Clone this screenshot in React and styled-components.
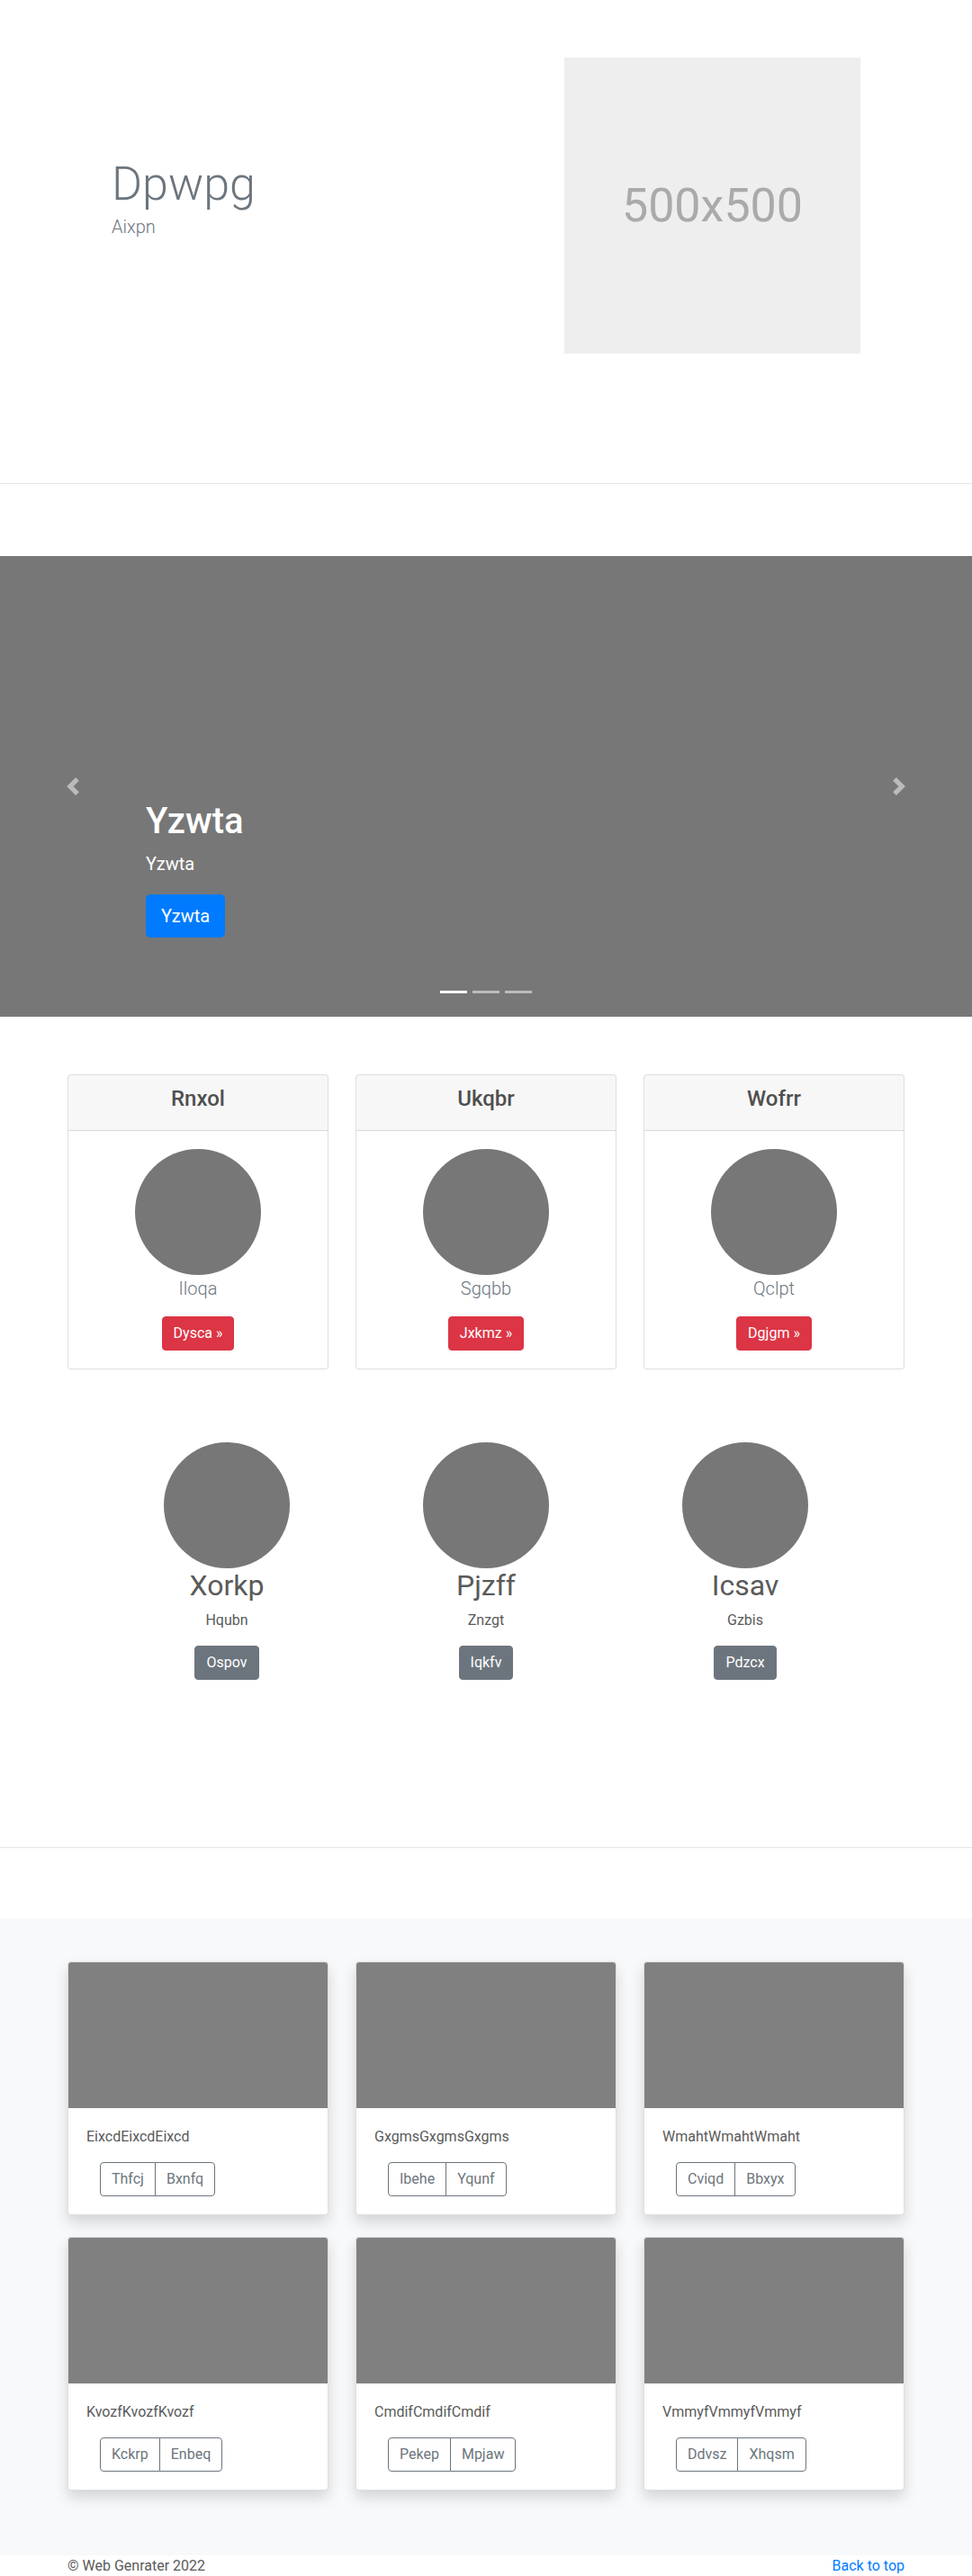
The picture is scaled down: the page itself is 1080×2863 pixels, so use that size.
import React from "react";
import styled, { createGlobalStyle, css } from "styled-components";

const pricing = [
  { title: "Rnxol", lead: "Iloqa", action: "Dysca" },
  { title: "Ukqbr", lead: "Sgqbb", action: "Jxkmz" },
  { title: "Wofrr", lead: "Qclpt", action: "Dgjgm" },
];

const team = [
  { name: "Xorkp", text: "Hqubn", action: "Ospov" },
  { name: "Pjzff", text: "Znzgt", action: "Iqkfv" },
  { name: "Icsav", text: "Gzbis", action: "Pdzcx" },
];

const album = [
  { text: "EixcdEixcdEixcd", a: "Thfcj", b: "Bxnfq" },
  { text: "GxgmsGxgmsGxgms", a: "Ibehe", b: "Yqunf" },
  { text: "WmahtWmahtWmaht", a: "Cviqd", b: "Bbxyx" },
  { text: "KvozfKvozfKvozf", a: "Kckrp", b: "Enbeq" },
  { text: "CmdifCmdifCmdif", a: "Pekep", b: "Mpjaw" },
  { text: "VmmyfVmmyfVmmyf", a: "Ddvsz", b: "Xhqsm" },
];

const GlobalStyle = createGlobalStyle`
  *, *::before, *::after { box-sizing: border-box; }
  body {
    margin: 0;
    font-family: "Segoe UI", Roboto, "Helvetica Neue", Arial, "Noto Sans", "Liberation Sans", sans-serif;
    font-size: 16px;
    line-height: 1.5;
    color: #5a5a5a;
    background: #fff;
  }
  h1, h2, h4, p { margin: 0; }
`;

const variants = {
  primary: css`
    background: #007bff;
    border-color: #007bff;
    color: #fff;
  `,
  danger: css`
    background: #dc3545;
    border-color: #dc3545;
    color: #fff;
  `,
  secondary: css`
    background: #6c757d;
    border-color: #6c757d;
    color: #fff;
  `,
  outline: css`
    background: transparent;
    border-color: #6c757d;
    color: #6c757d;
  `,
};

const Btn = styled.button`
  display: inline-block;
  font-family: inherit;
  font-weight: 400;
  font-size: ${(p) => (p.$lg ? "20px" : "16px")};
  line-height: 1.5;
  padding: ${(p) => (p.$lg ? "8px 16px" : "6px 12px")};
  border: 1px solid transparent;
  border-radius: ${(p) => (p.$lg ? "4.8px" : "4px")};
  cursor: pointer;
  ${(p) => variants[p.$variant || "primary"]}
`;

/* hero */
const Hero = styled.section`
  display: flex;
  justify-content: space-between;
  align-items: center;
  padding: 64px 124px 144px;
  border-bottom: 1px solid #e6e6e6;
`;

const HeroTitle = styled.h1`
  font-size: 52px;
  font-weight: 300;
  line-height: 1.2;
  color: #6c757d;
`;

const HeroLead = styled.p`
  font-size: 20px;
  font-weight: 300;
  color: #6c757d;
  margin-bottom: 16px;
`;

const Placeholder = styled.div`
  width: 329px;
  height: 329px;
  background: #eee;
  color: #aaa;
  font-size: 52px;
  display: flex;
  align-items: center;
  justify-content: center;
`;

/* carousel */
const Carousel = styled.section`
  position: relative;
  margin-top: 80px;
  height: 512px;
  background: #777;
  display: flex;
  align-items: flex-end;
`;

const Caption = styled.div`
  padding: 0 15% 88px;
  color: #fff;
`;

const CaptionTitle = styled.h1`
  font-size: 40px;
  font-weight: 500;
  line-height: 1.2;
  margin-bottom: 8px;
`;

const CaptionText = styled.p`
  font-size: 20px;
  margin-bottom: 19px;
`;

const Control = styled.span`
  position: absolute;
  top: 0;
  bottom: 0;
  ${(p) => p.$side}: 0;
  width: 15%;
  display: flex;
  align-items: center;
  justify-content: center;
  opacity: 0.5;
`;

const Indicators = styled.ol`
  position: absolute;
  left: 0;
  right: 0;
  bottom: 0;
  margin: 0 0 16px;
  padding: 0;
  list-style: none;
  display: flex;
  justify-content: center;
`;

const Indicator = styled.li`
  width: 30px;
  height: 23px;
  margin: 0 3px;
  border-top: 10px solid transparent;
  border-bottom: 10px solid transparent;
  background: #fff;
  background-clip: padding-box;
  opacity: ${(p) => (p.$active ? 1 : 0.5)};
`;

/* pricing */
const Container = styled.div`
  width: 930px;
  margin: 0 auto;
`;

const Deck = styled(Container)`
  margin-top: ${(p) => p.$top || 0}px;
  display: grid;
  grid-template-columns: repeat(3, 1fr);
  column-gap: 30px;
  row-gap: 24px;
`;

const Card = styled.div`
  background: #fff;
  border: 1px solid rgba(0, 0, 0, 0.125);
  border-radius: 4px;
  overflow: hidden;
  ${(p) => p.$shadow && "box-shadow: 0 8px 16px rgba(0, 0, 0, 0.15);"}
`;

const CardHeader = styled.div`
  padding: 12px 20px;
  background: rgba(0, 0, 0, 0.03);
  border-bottom: 1px solid rgba(0, 0, 0, 0.125);
  text-align: center;
`;

const CardTitle = styled.h4`
  font-size: 24px;
  font-weight: 500;
  line-height: 1.2;
  margin-bottom: 8px;
  color: #4f4f4f;
`;

const CardBody = styled.div`
  padding: 20px;
  text-align: ${(p) => p.$align || "left"};
`;

const Avatar = styled.div`
  width: 140px;
  height: 140px;
  border-radius: 50%;
  background: #777;
  margin: 0 auto;
`;

const MutedLead = styled.p`
  font-size: 20px;
  font-weight: 300;
  color: #6c757d;
  margin-bottom: 16px;
`;

/* marketing */
const TeamRow = styled.section`
  margin-top: 81px;
  padding-bottom: 170px;
  border-bottom: 1px solid #e6e6e6;
  display: grid;
  grid-template-columns: repeat(3, 288px);
  justify-content: center;
  text-align: center;
`;

const TeamName = styled.h2`
  font-size: 32px;
  font-weight: 400;
  line-height: 1.2;
  margin-bottom: 8px;
`;

const TeamText = styled.p`
  margin-bottom: 16px;
`;

/* album */
const Album = styled.section`
  margin-top: 78px;
  padding: 48px 0 72px;
  background: #f8f9fa;
`;

const Thumb = styled.div`
  height: 162px;
  background: #808080;
`;

const BtnGroup = styled.div`
  display: inline-flex;
  margin-left: 15px;
  ${Btn} {
    border-radius: 0;
  }
  ${Btn}:first-child {
    border-radius: 4px 0 0 4px;
  }
  ${Btn}:last-child {
    margin-left: -1px;
    border-radius: 0 4px 4px 0;
  }
`;

const Footer = styled.footer`
  display: flex;
  justify-content: space-between;
`;

const TopLink = styled.a`
  color: #007bff;
  text-decoration: none;
`;

const Chevron = ({ dir }) => (
  <svg width="20" height="20" viewBox="0 0 8 8">
    <path
      fill="#fff"
      d={
        dir === "prev"
          ? "M5.25 0l-4 4 4 4 1.5-1.5L4.25 4l2.5-2.5L5.25 0z"
          : "M2.75 0l-1.5 1.5L3.75 4l-2.5 2.5L2.75 8l4-4-4-4z"
      }
    />
  </svg>
);

const App = () => {
  return (
    <>
      <GlobalStyle />
      <Hero>
        <div>
          <HeroTitle>Dpwpg</HeroTitle>
          <HeroLead>Aixpn</HeroLead>
        </div>
        <Placeholder>500x500</Placeholder>
      </Hero>

      <Carousel>
        <Caption>
          <CaptionTitle>Yzwta</CaptionTitle>
          <CaptionText>Yzwta</CaptionText>
          <Btn $lg $variant="primary">Yzwta</Btn>
        </Caption>
        <Control $side="left">
          <Chevron dir="prev" />
        </Control>
        <Control $side="right">
          <Chevron dir="next" />
        </Control>
        <Indicators>
          <Indicator $active />
          <Indicator />
          <Indicator />
        </Indicators>
      </Carousel>

      <Deck $top={64}>
        {pricing.map((item) => (
          <Card key={item.title}>
            <CardHeader>
              <CardTitle>{item.title}</CardTitle>
            </CardHeader>
            <CardBody $align="center">
              <Avatar />
              <MutedLead>{item.lead}</MutedLead>
              <Btn $variant="danger">{item.action} »</Btn>
            </CardBody>
          </Card>
        ))}
      </Deck>

      <TeamRow>
        {team.map((m) => (
          <div key={m.name}>
            <Avatar />
            <TeamName>{m.name}</TeamName>
            <TeamText>{m.text}</TeamText>
            <TeamText>
              <Btn $variant="secondary">{m.action}</Btn>
            </TeamText>
          </div>
        ))}
      </TeamRow>

      <Album>
        <Deck>
          {album.map((c) => (
            <Card $shadow key={c.text}>
              <Thumb />
              <CardBody>
                <TeamText>{c.text}</TeamText>
                <BtnGroup>
                  <Btn $variant="outline">{c.a}</Btn>
                  <Btn $variant="outline">{c.b}</Btn>
                </BtnGroup>
              </CardBody>
            </Card>
          ))}
        </Deck>
      </Album>

      <Container>
        <Footer>
          <span>© Web Genrater 2022</span>
          <TopLink href="#">Back to top</TopLink>
        </Footer>
      </Container>
    </>
  );
};

export default App;
